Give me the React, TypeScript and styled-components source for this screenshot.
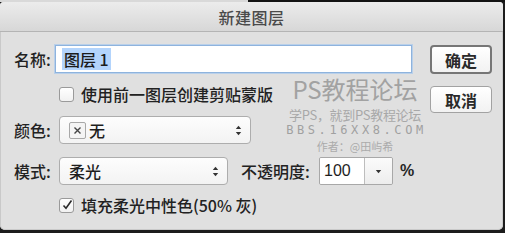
import React from "react";
import styled, { createGlobalStyle } from "styled-components";

const Global = createGlobalStyle`
  html, body { margin: 0; padding: 0; }
  body {
    width: 505px; height: 233px; overflow: hidden;
    background: #1c1c1c;
    font-family: "Noto Sans CJK SC", "Noto Sans", "Liberation Sans", sans-serif;
  }
`;

const Stage = styled.div`
  width: 505px;
  height: 233px;
  padding-top: 2px;
  box-sizing: border-box;
  background: linear-gradient(to bottom, transparent 2px, #1c1c1c 2px),
    linear-gradient(to right, #d9d9d9 248px, #141414 248px);
`;

const Window = styled.div`
  width: 503px;
  height: 228px;
  background: #e0e0e0;
  border-radius: 4px 4px 5px 5px;
  box-shadow: inset 0 0 0 1px #c9c9c9;
  display: flex;
  flex-direction: column;
  overflow: hidden;
  position: relative;
`;

const TitleBar = styled.div`
  height: 29px;
  flex: none;
  display: flex;
  align-items: center;
  justify-content: center;
  background: linear-gradient(to bottom, #ececec, #d7d7d7);
  border-bottom: 1px solid #b4b4b4;
  color: #4a4a4a;
  font-size: 16px;
  font-weight: 500;
  letter-spacing: 0.5px;
`;

const Body = styled.div`
  flex: 1;
  display: flex;
  padding: 13px 0 0 14px;
  position: relative;
`;

const Form = styled.div`
  width: 400px;
  display: flex;
  flex-direction: column;
  align-items: flex-start;
`;

const Row = styled.div<{ $mt?: number }>`
  display: flex;
  align-items: center;
  margin-top: ${(p) => p.$mt ?? 0}px;
`;

const Label = styled.span<{ $w?: number }>`
  width: ${(p) => p.$w ?? 41}px;
  flex: none;
  font-size: 16px;
  line-height: 18px;
  color: #222;
  font-weight: 500;
  white-space: nowrap;
`;

const NameInput = styled.div`
  width: 349px;
  height: 26px;
  background: #fff;
  border: 1px solid #8eb3dd;
  box-shadow: 0 0 0 1px #b9d0ea;
  display: flex;
  align-items: center;
  padding-left: 6px;
`;

const Selection = styled.span`
  background: #b3d4fc;
  color: #1c1c1c;
  font-size: 16px;
  padding: 0 2px;
  line-height: 22px;
  font-weight: 500;
`;

const CheckRow = styled.div<{ $mt?: number }>`
  display: flex;
  align-items: center;
  margin-left: 45px;
  margin-top: ${(p) => p.$mt ?? 0}px;
  font-size: 16px;
  line-height: 18px;
  height: 18px;
  color: #222;
  font-weight: 500;
  gap: 7px;
`;

const Box = styled.span`
  width: 13px;
  height: 13px;
  border: 1px solid #9a9a9a;
  border-radius: 3px;
  background: linear-gradient(#fff, #f1f1f1);
  display: inline-flex;
  align-items: center;
  justify-content: center;
  flex: none;
`;

const Select = styled.div<{ $w: number }>`
  width: ${(p) => p.$w}px;
  height: 26px;
  margin-left: 4px;
  border: 1px solid #adadad;
  border-radius: 4px;
  background: linear-gradient(#fdfdfd, #f3f3f3);
  display: flex;
  align-items: center;
  padding: 0 8px 0 9px;
  box-sizing: content-box;
  font-size: 16px;
  line-height: 18px;
  color: #1e1e1e;
  font-weight: 500;
  gap: 2px;
`;

const Grow = styled.span`
  flex: 1;
`;

const Swatch = styled.span`
  width: 15px;
  height: 15px;
  border: 1px solid #a8a8a8;
  border-radius: 2px;
  background: #f4f4f4;
  display: inline-flex;
  align-items: center;
  justify-content: center;
  margin-right: 1px;
`;

const OpacityGroup = styled.div`
  display: flex;
  align-items: center;
  margin-left: 13px;
`;

const NumBox = styled.div`
  margin-left: 6px;
  height: 26px;
  display: flex;
  border: 1px solid #a8a8a8;
  border-radius: 2px;
  overflow: hidden;
`;

const NumText = styled.div`
  width: 40px;
  background: #fff;
  display: flex;
  align-items: center;
  padding-left: 4px;
  font-size: 16px;
  color: #1e1e1e;
  font-family: "Liberation Sans", "Noto Sans", sans-serif;
  border-right: 1px solid #bdbdbd;
`;

const NumDrop = styled.div`
  width: 27px;
  background: linear-gradient(#fbfbfb, #ededed);
  display: flex;
  align-items: center;
  justify-content: center;
`;

const Percent = styled.span`
  margin-left: 7px;
  font-size: 16px;
  color: #262626;
  font-family: "Liberation Sans", sans-serif;
  font-weight: 700;
`;

const Buttons = styled.div`
  margin-left: 16px;
  display: flex;
  flex-direction: column;
  gap: 12px;
`;

const Button = styled.div<{ $primary?: boolean }>`
  width: ${(p) => (p.$primary ? 58 : 60)}px;
  height: 25px;
  border: ${(p) => (p.$primary ? "2px solid #767676" : "1px solid #a2a2a2")};
  border-radius: 4px;
  background: linear-gradient(#ffffff, #f2f2f2);
  display: flex;
  align-items: center;
  justify-content: center;
  font-size: 16px;
  font-weight: 700;
  color: #2a2a2a;
`;

const Watermark = styled.div`
  position: absolute;
  left: 284px;
  top: 43px;
  width: 142px;
  display: flex;
  flex-direction: column;
  align-items: center;
  color: #a4a4a4;
  pointer-events: none;
`;

const WmTitle = styled.div`
  font-size: 24px;
  line-height: 28px;
  font-weight: 400;
  color: #a2a2a2;
  margin-bottom: 5px;
`;

const WmSub = styled.div`
  font-size: 13px;
  line-height: 14px;
  color: #a8a8a8;
  white-space: nowrap;
  letter-spacing: -0.3px;
`;

const WmUrl = styled.div`
  font-family: "DejaVu Sans Mono", "Liberation Mono", monospace;
  font-size: 12px;
  line-height: 17px;
  letter-spacing: 3.6px;
  color: #a0a0a0;
  margin-right: -3px;
`;

const WmAuthor = styled.div`
  font-size: 11px;
  line-height: 15px;
  color: #ababab;
`;

const Arrows = () => (
  <svg width="7" height="11" viewBox="0 0 7 11">
    <path d="M3.5 0.8 L6.2 4 H0.8 Z" fill="#333" />
    <path d="M3.5 10.2 L6.2 7 H0.8 Z" fill="#333" />
  </svg>
);

export default function App() {
  return (
    <>
      <Global />
      <Stage>
        <Window>
          <TitleBar>新建图层</TitleBar>
          <Body>
            <Form>
              <Row>
                <Label>名称:</Label>
                <NameInput>
                  <Selection>图层 1</Selection>
                </NameInput>
              </Row>
              <CheckRow $mt={12}>
                <Box />
                <span>使用前一图层创建剪贴蒙版</span>
              </CheckRow>
              <Row $mt={13}>
                <Label>颜色:</Label>
                <Select $w={173}>
                  <Swatch>
                    <svg width="9" height="9" viewBox="0 0 9 9">
                      <path d="M1.5 1.5 L7.5 7.5 M7.5 1.5 L1.5 7.5" stroke="#444" strokeWidth="1.4" />
                    </svg>
                  </Swatch>
                  无
                  <Grow />
                  <Arrows />
                </Select>
              </Row>
              <Row $mt={13}>
                <Label>模式:</Label>
                <Select $w={150}>
                  柔光
                  <Grow />
                  <Arrows />
                </Select>
                <OpacityGroup>
                  <Label $w={72}>不透明度:</Label>
                  <NumBox>
                    <NumText>100</NumText>
                    <NumDrop>
                      <svg width="7" height="5" viewBox="0 0 7 5">
                        <path d="M0.8 1 H6.2 L3.5 4.2 Z" fill="#333" />
                      </svg>
                    </NumDrop>
                  </NumBox>
                  <Percent>%</Percent>
                </OpacityGroup>
              </Row>
              <CheckRow $mt={11}>
                <Box>
                  <svg width="12" height="12" viewBox="0 0 12 12">
                    <path d="M2.5 6.5 L5 9.2 L10.5 1.5" stroke="#2a2a2a" strokeWidth="1.6" fill="none" />
                  </svg>
                </Box>
                <span>填充柔光中性色(50% 灰)</span>
              </CheckRow>
            </Form>
            <Buttons>
              <Button $primary>确定</Button>
              <Button>取消</Button>
            </Buttons>
            <Watermark>
              <WmTitle>PS教程论坛</WmTitle>
              <WmSub>学PS，就到PS教程论坛</WmSub>
              <WmUrl>BBS.16XX8.COM</WmUrl>
              <WmAuthor>作者：@田屿希</WmAuthor>
            </Watermark>
          </Body>
        </Window>
      </Stage>
    </>
  );
}
